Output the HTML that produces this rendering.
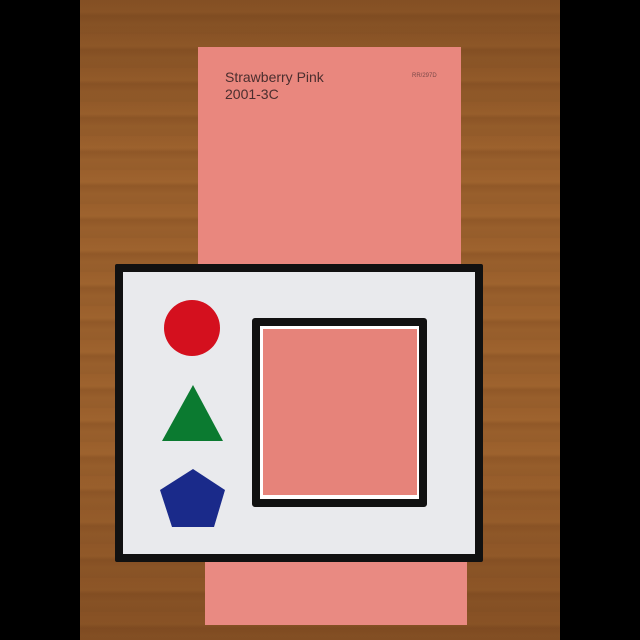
<!DOCTYPE html>
<html><head><style>
body{margin:0;width:640px;height:640px;background:#000;position:relative;overflow:hidden;font-family:"Liberation Sans",sans-serif}
.wood{position:absolute;left:80px;top:0;width:480px;height:640px;background:repeating-linear-gradient(180deg,#9a5f2c 0px,#9e632e 12px,#905828 16px,#985f2c 24px,#965d2b 34px)}
.wood2{position:absolute;left:80px;top:0;width:480px;height:640px;background:linear-gradient(180deg,rgba(90,50,20,.35),rgba(0,0,0,0) 25%,rgba(0,0,0,0) 70%,rgba(80,40,15,.3))}
.pink{position:absolute;background:#e9877e}
</style></head><body>
<div class="wood"></div><div class="wood2"></div>
<div class="pink" style="left:198px;top:47px;width:263px;height:240px"></div>
<div class="pink" style="left:205px;top:540px;width:262px;height:85px;background:#e98a82"></div>
<div style="position:absolute;left:225px;top:69px;font-size:14px;line-height:17px;color:#4a2e2e">Strawberry Pink<br>2001-3C</div>
<div style="position:absolute;left:412px;top:73px;font-size:6px;color:#7a4848">RR/297D</div>
<div style="position:absolute;left:115px;top:264px;width:352px;height:282px;border:8px solid #111;background:#e9eaed;border-radius:2px"></div>
<div style="position:absolute;left:252px;top:318px;width:159px;height:173px;border:8px solid #111;background:#fff;border-radius:3px"></div>
<div class="pink" style="left:263px;top:329px;width:154px;height:166px;background:#e6837a"></div>
<svg width="640" height="640" style="position:absolute;left:0;top:0">
<circle cx="192" cy="328" r="28" fill="#d4101e"/>
<polygon points="193,385 162,441 223,441" fill="#0b7a30"/>
<polygon points="193,469 225,490 214,527 172,527 160,490" fill="#1a2a8a"/>
</svg>
</body></html>
